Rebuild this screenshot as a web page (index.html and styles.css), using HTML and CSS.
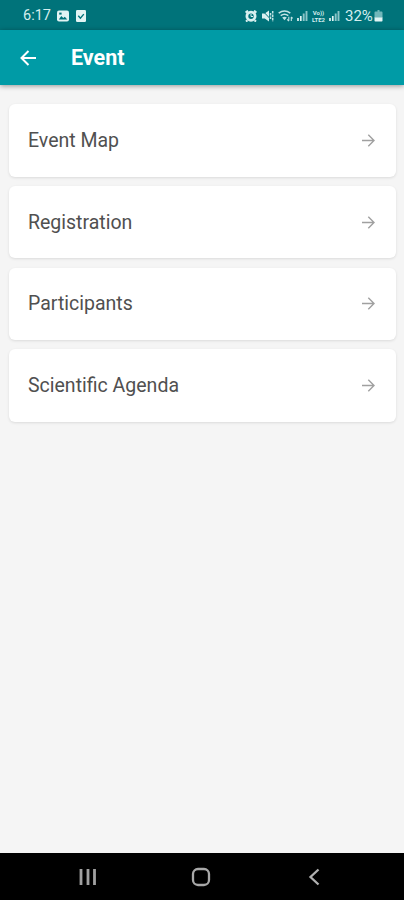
FILE: index.html
```html
<!DOCTYPE html>
<html lang="en">
<head>
    <meta charset="UTF-8">
    <meta name="viewport" content="width=device-width, initial-scale=1.0">
    <title>Event</title>
    <link rel="stylesheet" href="styles.css">
</head>
<body>
    <div class="status-bar">
        <div class="status-left">
            <span class="clock">6:17</span>
            <svg class="icon-image" width="12" height="12" viewBox="0 0 12 12">
                <rect x="0" y="0.5" width="12" height="11" rx="2" fill="#e2f4f4"/>
                <path d="M1.8 9.5L4.3 6l2 2 1.5-1.3 2.5 2.8z" fill="#00737a"/>
                <rect x="2.2" y="2.6" width="2.4" height="2" fill="#00737a"/>
            </svg>
            <svg width="10" height="12" viewBox="0 0 10 12">
                <rect x="0" y="0" width="10" height="12" rx="1.2" fill="#e2f4f4"/>
                <path d="M2.3 5.8l2.1 2.3 3.4-4" fill="none" stroke="#00737a" stroke-width="1.4"/>
            </svg>
        </div>
        <div class="status-right">
            <!-- alarm -->
            <svg width="12" height="12" viewBox="0 0 12 12">
                <path d="M.6 2.6L3 .7M11.4 2.6L9 .7M2.5 10.2L1 11.6M9.5 10.2l1.5 1.4" stroke="#d9f0f0" stroke-width="2"/>
                <circle cx="6" cy="6.2" r="4.1" fill="none" stroke="#d9f0f0" stroke-width="2.8"/>
                <path d="M6 4v2.5h2" fill="none" stroke="#d9f0f0"/>
            </svg>
            <!-- sound off -->
            <svg class="icon-mute" width="12" height="12" viewBox="0 0 12 12">
                <path d="M0 3.6h2.8L7 .4v11.2L2.8 8.4H0z" fill="#d9f0f0"/>
                <path d="M.6.8l10 10.5" stroke="#00737a"/>
                <path d="M8.5 3v6M10.7 1v10.4" stroke="#c3e4e5" stroke-width="1.5" stroke-dasharray="2.6 .8"/>
            </svg>
            <!-- wifi -->
            <svg class="icon-wifi" width="15" height="12" viewBox="0 0 15 12">
                <path d="M.7 3.2q5.8-4.4 11.6 0M2.7 5.7q3.8-3 7.6 0" fill="none" stroke="#c3e4e5" stroke-width="1.6"/>
                <path d="M4.2 7.6q2.3-1.7 4.6 0L6.5 10.3z" fill="#c3e4e5"/>
                <path d="M10.8 6.8v4M9.2 9.4l1.6 1.8M13.3 11V7M14.7 8.4L13.3 7" stroke="#c3e4e5" stroke-width="1.1"/>
            </svg>
            <svg class="icon-signal" width="11" height="11" viewBox="0 0 11 11">
                <path d="M1 8v3M3.8 6v5" stroke="#e2f4f4" stroke-width="1.7"/>
                <path d="M6.7 3.5V11M9.5 1v10" stroke="#8cc5c8" stroke-width="1.9"/>
            </svg>
            <span class="volte"><span>Vo))</span><span>LTE2</span></span>
            <svg class="icon-signal-two" width="11" height="11" viewBox="0 0 11 11">
                <path d="M1 8v3M3.8 6v5" stroke="#e2f4f4" stroke-width="1.7"/>
                <path d="M6.7 3.5V11M9.5 1v10" stroke="#8cc5c8" stroke-width="1.9"/>
            </svg>
            <span class="percent">32%</span>
            <svg width="9" height="12" viewBox="0 0 9 12">
                <path d="M3.5 0h2v1.5h2.1q.9 0 .9.9V8h-8V2.4q0-.9.9-.9h2.1z" fill="#72b7ba"/>
                <path d="M.5 7.5h8v3.2q0 .8-.8.8H1.3q-.8 0-.8-.8z" fill="#e2f4f4"/>
            </svg>
        </div>
    </div>

    <header class="app-bar">
        <svg class="back" width="18" height="18" viewBox="0 0 18 18">
            <path d="M17 9H3M9.5 2L2.5 9l7 7" fill="none" stroke="#fff" stroke-width="2"/>
        </svg>
        <h1>Event</h1>
    </header>

    <main class="menu">
        <div class="card">
            <span>Event Map</span>
            <svg class="arrow" viewBox="0 0 13 13"><path d="M0 6.5h11.6M6.3 .8L12 6.5l-5.7 5.7"/></svg>
        </div>
        <div class="card">
            <span>Registration</span>
            <svg class="arrow" viewBox="0 0 13 13"><path d="M0 6.5h11.6M6.3 .8L12 6.5l-5.7 5.7"/></svg>
        </div>
        <div class="card">
            <span>Participants</span>
            <svg class="arrow" viewBox="0 0 13 13"><path d="M0 6.5h11.6M6.3 .8L12 6.5l-5.7 5.7"/></svg>
        </div>
        <div class="card">
            <span>Scientific Agenda</span>
            <svg class="arrow" viewBox="0 0 13 13"><path d="M0 6.5h11.6M6.3 .8L12 6.5l-5.7 5.7"/></svg>
        </div>
    </main>

    <nav class="nav-bar">
        <svg width="18" height="18" viewBox="0 0 18 18">
            <path d="M2 1v16M9 1v16M15.5 1v16" stroke="#a0a0a0" stroke-width="2.8"/>
        </svg>
        <svg width="20" height="20" viewBox="0 0 20 20">
            <rect x="2" y="2" width="16" height="16" rx="5" fill="none" stroke="#a8a8a8" stroke-width="2.3"/>
        </svg>
        <svg width="18" height="18" viewBox="0 0 18 18">
            <path d="M13.5 1.5L5.5 9l8 7.5" fill="none" stroke="#b0b0b0" stroke-width="2.3"/>
        </svg>
    </nav>
</body>
</html>
```
FILE: styles.css
```css
* {
    margin: 0;
    padding: 0;
    box-sizing: border-box;
}

body {
    font-family: Roboto, 'Liberation Sans', sans-serif;
    background: #f5f5f5;
    height: 100vh;
    display: flex;
    flex-direction: column;
    overflow: hidden;
}

svg {
    display: block;
    flex-shrink: 0;
}

.status-bar {
    height: 30px;
    padding: 1px 21px 0 23px;
    display: flex;
    align-items: center;
    justify-content: space-between;
    background: #00737a;
    color: #d5eeee;
}

.status-left,
.status-right {
    display: flex;
    align-items: center;
}

.clock {
    width: 28px;
    font-size: 14.5px;
}

.icon-image {
    margin: 0 7px 0 6px;
}

.icon-mute {
    margin: 0 4px 0 5px;
}

.icon-signal {
    margin: 0 3px 0 4px;
}

.icon-signal-two {
    margin: 0 5px 0 3px;
}

.volte {
    width: 15px;
    display: flex;
    flex-direction: column;
    align-items: center;
    font-size: 6px;
    font-weight: bold;
    line-height: 7px;
}

.percent {
    width: 29px;
    font-size: 15px;
}

.app-bar {
    height: 55px;
    padding-left: 19px;
    display: flex;
    align-items: center;
    background: #009ba6;
    color: white;
    box-shadow: 0 1px 5px rgba(0, 0, 0, 0.4);
}

.app-bar h1 {
    margin-left: 34px;
    font-size: 21.5px;
    font-weight: bold;
}

.menu {
    flex: 1;
    padding: 19px 8px 0 9px;
    display: flex;
    flex-direction: column;
    gap: 9.25px;
}

.card {
    height: 72.5px;
    padding: 0 21px 0 19px;
    display: flex;
    align-items: center;
    justify-content: space-between;
    background: white;
    border-radius: 6px;
    box-shadow: 0 1px 3px rgba(0, 0, 0, 0.11);
    color: #505050;
    font-size: 19.5px;
}

.arrow {
    width: 13px;
    height: 13px;
    fill: none;
    stroke: #a0a0a0;
    stroke-width: 1.4;
}

.nav-bar {
    height: 47px;
    padding: 1px 81px 0 79px;
    display: flex;
    align-items: center;
    justify-content: space-between;
    background: black;
}
```
